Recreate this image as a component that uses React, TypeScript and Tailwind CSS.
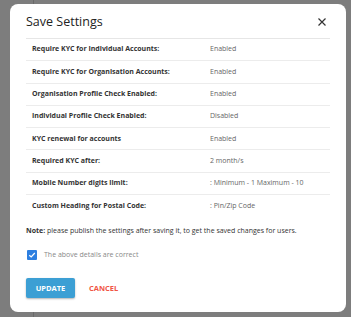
import React from "react";

const rows: [string, string][] = [
  ["Require KYC for Individual Accounts:", "Enabled"],
  ["Require KYC for Organisation Accounts:", "Enabled"],
  ["Organisation Profile Check Enabled:", "Enabled"],
  ["Individual Profile Check Enabled:", "Disabled"],
  ["KYC renewal for accounts", "Enabled"],
  ["Required KYC after:", "2 month/s"],
  ["Mobile Number digits limit:", ": Minimum - 1 Maximum - 10"],
  ["Custom Heading for Postal Code:", ": Pin/Zip Code"],
];

export default function App() {
  return (
    <div
      className="relative w-[351px] h-[317px] bg-[#7d7d7d] overflow-hidden"
      style={{ fontFamily: '"Open Sans", "Noto Sans", sans-serif' }}
    >
      <div className="absolute left-[33px] top-0 w-px h-full bg-[#6a6a6a]" />
      <div className="absolute left-[10px] top-[4px] w-[336px] h-[308px] bg-white rounded-[8px] flex flex-col px-[16px]">
        <div className="flex items-center justify-between h-[34px] pt-[2px]">
          <span className="text-[12.5px] text-[#222] leading-none">Save Settings</span>
          <svg width="8" height="8" viewBox="0 0 8 8" className="mr-[4px]">
            <path d="M0.5 0.5 L7.5 7.5 M7.5 0.5 L0.5 7.5" stroke="#333" strokeWidth="1.2" />
          </svg>
        </div>
        <div className="h-px bg-[#e6e6e6]" />
        <div className="flex flex-col">
          {rows.map(([k, v], i) => (
            <div
              key={i}
              className={`flex items-center h-[22.3px] ${i < rows.length - 1 ? "border-b border-[#ececec]" : ""}`}
            >
              <span className="w-[184px] pl-[6px] text-[7px] font-bold text-[#333]">{k}</span>
              <span className="text-[7px] text-[#666]">{v}</span>
            </div>
          ))}
        </div>
        <div className="mt-[9px] text-[7px] text-[#333]">
          <span className="font-bold">Note:</span> please publish the settings after saving it, to get the saved changes for users.
        </div>
        <div className="flex items-center mt-[13px] ml-[1px]">
          <div className="w-[10px] h-[10px] rounded-[1px] bg-[#2d7fe0] flex items-center justify-center">
            <svg width="8" height="8" viewBox="0 0 8 8">
              <path d="M1.3 4.2 L3.2 6 L6.8 2" stroke="white" strokeWidth="1.2" fill="none" />
            </svg>
          </div>
          <span className="ml-[7px] text-[7px] text-[#888]">The above details are correct</span>
        </div>
        <div className="flex items-center mt-[18px]">
          <button className="w-[49px] h-[20px] bg-[#3c9fd4] rounded-[2px] text-white text-[7.5px] font-bold shadow-[0_1px_2px_rgba(0,0,0,0.3)]">
            UPDATE
          </button>
          <button className="ml-[14px] text-[#f05545] text-[7.5px] font-bold">CANCEL</button>
        </div>
      </div>
    </div>
  );
}
